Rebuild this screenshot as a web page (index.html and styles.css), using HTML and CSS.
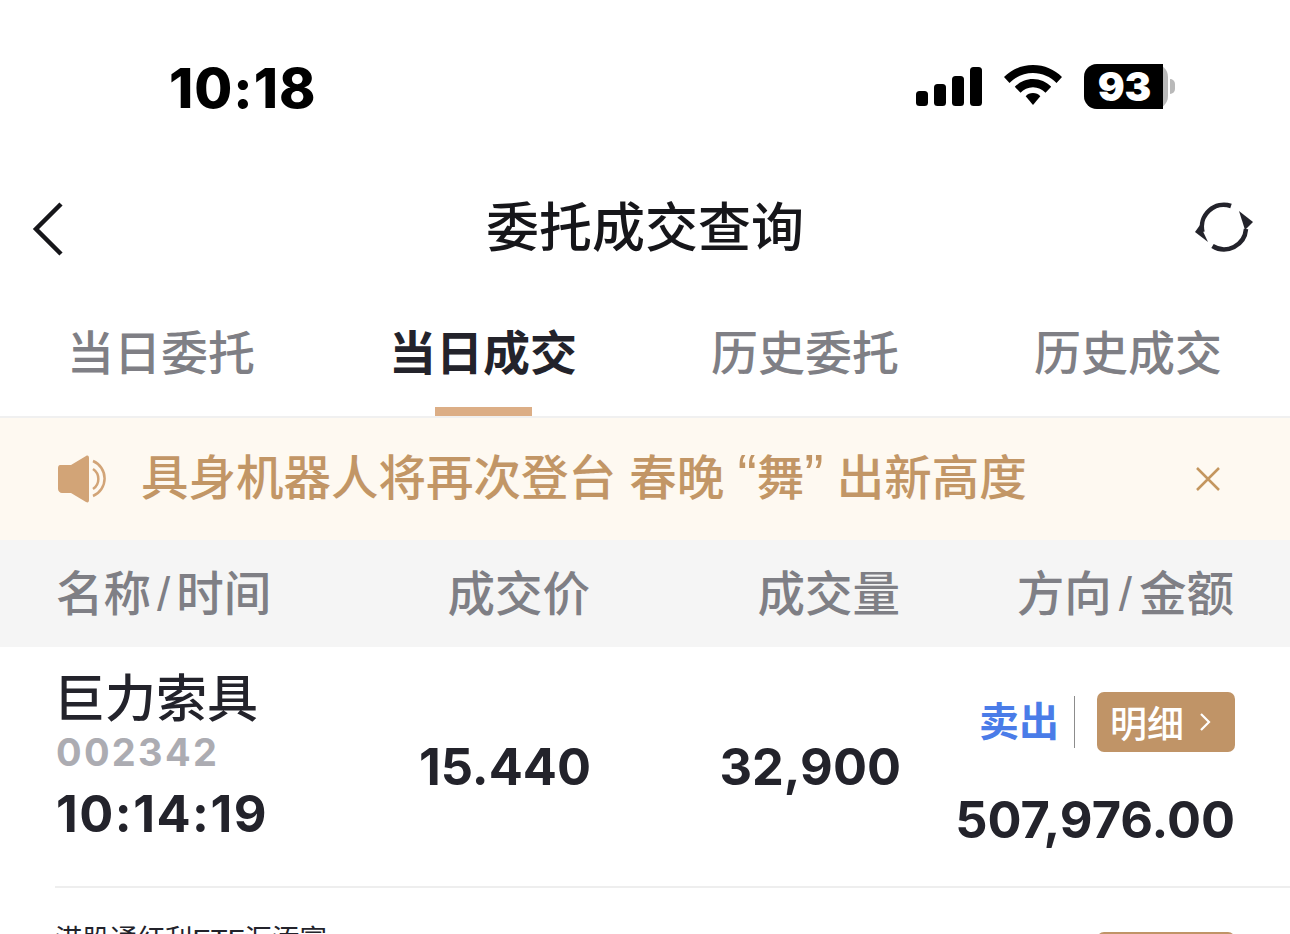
FILE: index.html
```html
<!DOCTYPE html>
<html>
<head>
  <meta charset="utf-8">
  <title>委托成交查询</title>
  <link rel="stylesheet" href="styles.css">
</head>
<body>
  <div class="status-bar">
    <div class="clock">10:18</div>
    <div class="status-icons">
      <svg class="signal" width="68" height="40" viewBox="0 0 68 40">
        <rect x="1" y="24" width="12" height="15" rx="3.5"/>
        <rect x="19" y="17" width="12" height="22" rx="3.5"/>
        <rect x="37" y="9" width="12" height="30" rx="3.5"/>
        <rect x="55" y="0" width="12" height="39" rx="3.5"/>
      </svg>
      <svg class="wifi" width="60" height="42" viewBox="0 0 60 42">
        <path d="M30 0C18.500 0 8.500 4.500 1 12L6.500 18C12.500 11.800 20.800 8 30 8C39.200 8 47.500 11.800 53.500 18L59 12C51.500 4.500 41.500 0 30 0Z"/>
        <path d="M30 14C23 14 16.500 17 11.800 21.800L17.500 27.800C20.700 24.400 25 22.300 30 22.300C35 22.300 39.300 24.400 42.500 27.800L48.200 21.800C43.500 17 37 14 30 14Z"/>
        <path d="M30 28C27 28 24.500 29.200 22.700 31.200L30 40L37.300 31.200C35.500 29.200 33 28 30 28Z"/>
      </svg>
      <div class="battery">
        <div class="battery-body"><span class="battery-level">93</span></div>
        <div class="battery-cap"></div>
      </div>
    </div>
  </div>

  <div class="nav">
    <svg class="nav-back" width="32" height="54" viewBox="0 0 32 54">
      <path d="M29 2L4 27L29 52" fill="none" stroke="#16161a" stroke-width="4.500"/>
    </svg>
    <div class="nav-title">委托成交查询</div>
    <svg class="nav-refresh" width="60" height="54" viewBox="0 0 60 54">
      <path d="M37 4A22 22 0 0 0 8.500 30" fill="none" stroke="#23232b" stroke-width="4.500"/>
      <path d="M18.500 44A22 22 0 0 0 52 27" fill="none" stroke="#23232b" stroke-width="4.500"/>
      <path d="M1 30L14 40L6 23Z" fill="#23232b"/>
      <path d="M45 9L59 20L51 28Z" fill="#23232b"/>
    </svg>
  </div>

  <div class="tabs">
    <div class="tab">当日委托</div>
    <div class="tab tab-active">当日成交</div>
    <div class="tab">历史委托</div>
    <div class="tab">历史成交</div>
  </div>

  <div class="notice">
    <svg class="notice-icon" width="50" height="48" viewBox="0 0 50 48">
      <path d="M3 10H14L29 1C31 0 32 1 32 3V45C32 47 31 48 29 47L14 38H5C3 38 1 36 1 34V13C1 11 2 10 3 10Z" fill="#d2a477"/>
      <path d="M36 14A12 12 0 0 1 36 34" fill="none" stroke="#d2a477" stroke-width="2.500"/>
      <path d="M36 6A19 19 0 0 1 36 41" fill="none" stroke="#d2a477" stroke-width="2.500"/>
    </svg>
    <div class="notice-text">具身机器人将再次登台 春晚 <span class="quote">“</span>舞<span class="quote">”</span> 出新高度</div>
    <svg class="notice-close" width="26" height="26" viewBox="0 0 26 26">
      <path d="M2 2L24 24M24 2L2 24" stroke="#c4965f" stroke-width="2.500" fill="none"/>
    </svg>
  </div>

  <div class="table-head">
    <div class="col-name">名称<span class="slash">/</span>时间</div>
    <div class="col-price">成交价</div>
    <div class="col-qty">成交量</div>
    <div class="col-amount">方向<span class="slash">/</span>金额</div>
  </div>

  <div class="row">
    <div class="col-name">
      <div class="stock-name">巨力索具</div>
      <div class="stock-code">002342</div>
      <div class="stock-time">10:14:19</div>
    </div>
    <div class="col-price cell-num">15.440</div>
    <div class="col-qty cell-num">32,900</div>
    <div class="col-amount">
      <div class="trade-top">
        <span class="trade-side">卖出</span>
        <span class="trade-sep"></span>
        <span class="detail-btn">明细
          <svg width="12" height="20" viewBox="0 0 12 20"><path d="M2 2L10 10L2 18" fill="none" stroke="#fff" stroke-width="2.200"/></svg>
        </span>
      </div>
      <div class="trade-amount">507,976.00</div>
    </div>
  </div>

  <div class="row row-next">
    <div class="col-name">
      <div class="stock-name-small">港股通红利ETF汇添富</div>
    </div>
    <div class="col-price"></div>
    <div class="col-qty"></div>
    <div class="col-amount">
      <div class="trade-top">
        <span class="detail-btn detail-btn-next"></span>
      </div>
    </div>
  </div>
</body>
</html>
```

FILE: styles.css
```css
:root {
  --text: #23232b;
  --muted: #7f7f85;
  --gold: #c09467;
  --line: #eeeeee;
}

html, body {
  margin: 0;
  padding: 0;
}

body {
  width: 1290px;
  height: 934px;
  overflow: hidden;
  background: #ffffff;
  color: var(--text);
  font-family: "Liberation Sans", "Noto Sans CJK SC", sans-serif;
}

/* status bar */
.status-bar {
  height: 174px;
  display: flex;
  justify-content: space-between;
  align-items: flex-start;
  padding: 0 115px 0 169px;
  box-sizing: border-box;
}

.clock {
  margin-top: 58px;
  font-family: "Inter", "Liberation Sans", sans-serif;
  font-size: 55px;
  line-height: 60px;
  font-weight: 800;
  letter-spacing: 1px;
  color: #000000;
}

.status-icons {
  display: flex;
  align-items: center;
  margin-top: 64px;
  height: 44px;
}

.signal {
  fill: #000000;
  margin-top: 2px;
}

.wifi {
  margin-left: 20px;
  fill: #000000;
}

.battery {
  display: flex;
  align-items: center;
  margin-left: 21px;
}

.battery-body {
  width: 84px;
  height: 45px;
  border-radius: 13px;
  background: #b9b9b9;
}

.battery-level {
  display: block;
  width: 79px;
  height: 45px;
  border-radius: 13px 0 0 13px;
  background: #000000;
  color: #ffffff;
  font-family: "Inter", "Liberation Sans", sans-serif;
  font-size: 40px;
  font-weight: 900;
  line-height: 45px;
  text-align: center;
  padding-left: 2px;
  box-sizing: border-box;
}

.battery-cap {
  width: 5px;
  height: 15px;
  margin-left: 2px;
  border-radius: 0 8px 8px 0;
  background: #b9b9b9;
}

/* nav */
.nav {
  height: 110px;
  display: flex;
  align-items: center;
  justify-content: space-between;
  padding: 0 36px 0 32px;
}

.nav-title {
  font-size: 53px;
  line-height: 60px;
  font-weight: 500;
  color: #16161a;
  margin-left: 32px;
}

/* tabs */
.tabs {
  height: 134px;
  display: grid;
  grid-template-columns: 322px 322px 322px 324px;
  border-bottom: 2px solid #f0f0f0;
  box-sizing: border-box;
}

.tab {
  position: relative;
  padding-top: 40px;
  text-align: center;
  font-size: 47px;
  line-height: 60px;
  font-weight: 500;
  color: var(--muted);
}

.tab-active {
  color: var(--text);
  font-weight: 700;
}

.tab-active::after {
  content: "";
  position: absolute;
  left: 113px;
  bottom: 0;
  width: 97px;
  height: 9px;
  background: #dcae86;
}

/* notice */
.notice {
  height: 122px;
  display: flex;
  align-items: center;
  padding: 0 69px 0 57px;
  background: #fef9f1;
}

.notice-text {
  flex: 1;
  margin-left: 34px;
  font-size: 47.500px;
  line-height: 60px;
  font-weight: 500;
  color: #c29666;
  white-space: nowrap;
}

.quote {
  font-size: 58px;
  line-height: 40px;
}

/* table */
.table-head,
.row {
  display: grid;
  grid-template-columns: 340px 194px 310px 335px;
  padding: 0 0 0 56px;
}

.table-head {
  height: 107px;
  align-items: center;
  padding-bottom: 6px;
  box-sizing: border-box;
  background: #f5f5f5;
  font-size: 47.500px;
  font-weight: 500;
  color: var(--muted);
}

.table-head .col-amount {
  margin-right: 1px;
}

.slash {
  margin: 0 7px;
}

.table-head .col-name .slash {
  margin: 0 6px;
}

.col-price,
.col-qty,
.col-amount {
  text-align: right;
}

.row {
  height: 241px;
  align-items: center;
  box-sizing: border-box;
  position: relative;
}

.row::after {
  content: "";
  position: absolute;
  left: 55px;
  right: 0;
  bottom: 0;
  height: 2px;
  background: var(--line);
}

.row-next::after {
  display: none;
}

.stock-name {
  font-size: 51px;
  line-height: 60px;
  font-weight: 500;
  margin-top: -22px;
  margin-left: -2px;
}

.stock-code {
  font-family: "Inter", "Liberation Sans", sans-serif;
  font-size: 38px;
  line-height: 48px;
  font-weight: 700;
  color: #acacb2;
  letter-spacing: 2.300px;
  margin-top: -2px;
}

.stock-time {
  font-family: "Inter", "Liberation Sans", sans-serif;
  font-size: 50.500px;
  line-height: 60px;
  font-weight: 700;
  letter-spacing: 1.500px;
  margin-top: 8px;
}

.cell-num {
  font-family: "Inter", "Liberation Sans", sans-serif;
  font-size: 50.500px;
  font-weight: 700;
  line-height: 60px;
  margin-top: -2px;
  margin-right: -1px;
}

.trade-top {
  display: flex;
  align-items: center;
  justify-content: flex-end;
  margin-top: 7px;
}

.trade-side {
  font-size: 40px;
  line-height: 50px;
  font-weight: 700;
  color: #4a7ce8;
}

.trade-sep {
  width: 1px;
  height: 52px;
  margin: 0 22px 0 15px;
  background: #8c8c8c;
}

.detail-btn {
  display: flex;
  align-items: center;
  justify-content: space-between;
  width: 138px;
  height: 60px;
  padding: 0 24px 0 13px;
  box-sizing: border-box;
  border-radius: 7px;
  background: var(--gold);
  color: #ffffff;
  font-size: 37px;
  font-weight: 500;
}

.trade-amount {
  margin-top: 38px;
  font-family: "Inter", "Liberation Sans", sans-serif;
  font-size: 50.500px;
  line-height: 60px;
  font-weight: 700;
}

.row-next {
  height: 60px;
  align-items: start;
}

.stock-name-small {
  margin-top: 32px;
  margin-left: -1px;
  font-size: 27.500px;
  line-height: 40px;
  white-space: nowrap;
}

.row-next .trade-top {
  margin-top: 44px;
}

.detail-btn-next {
  height: 40px;
}
```
